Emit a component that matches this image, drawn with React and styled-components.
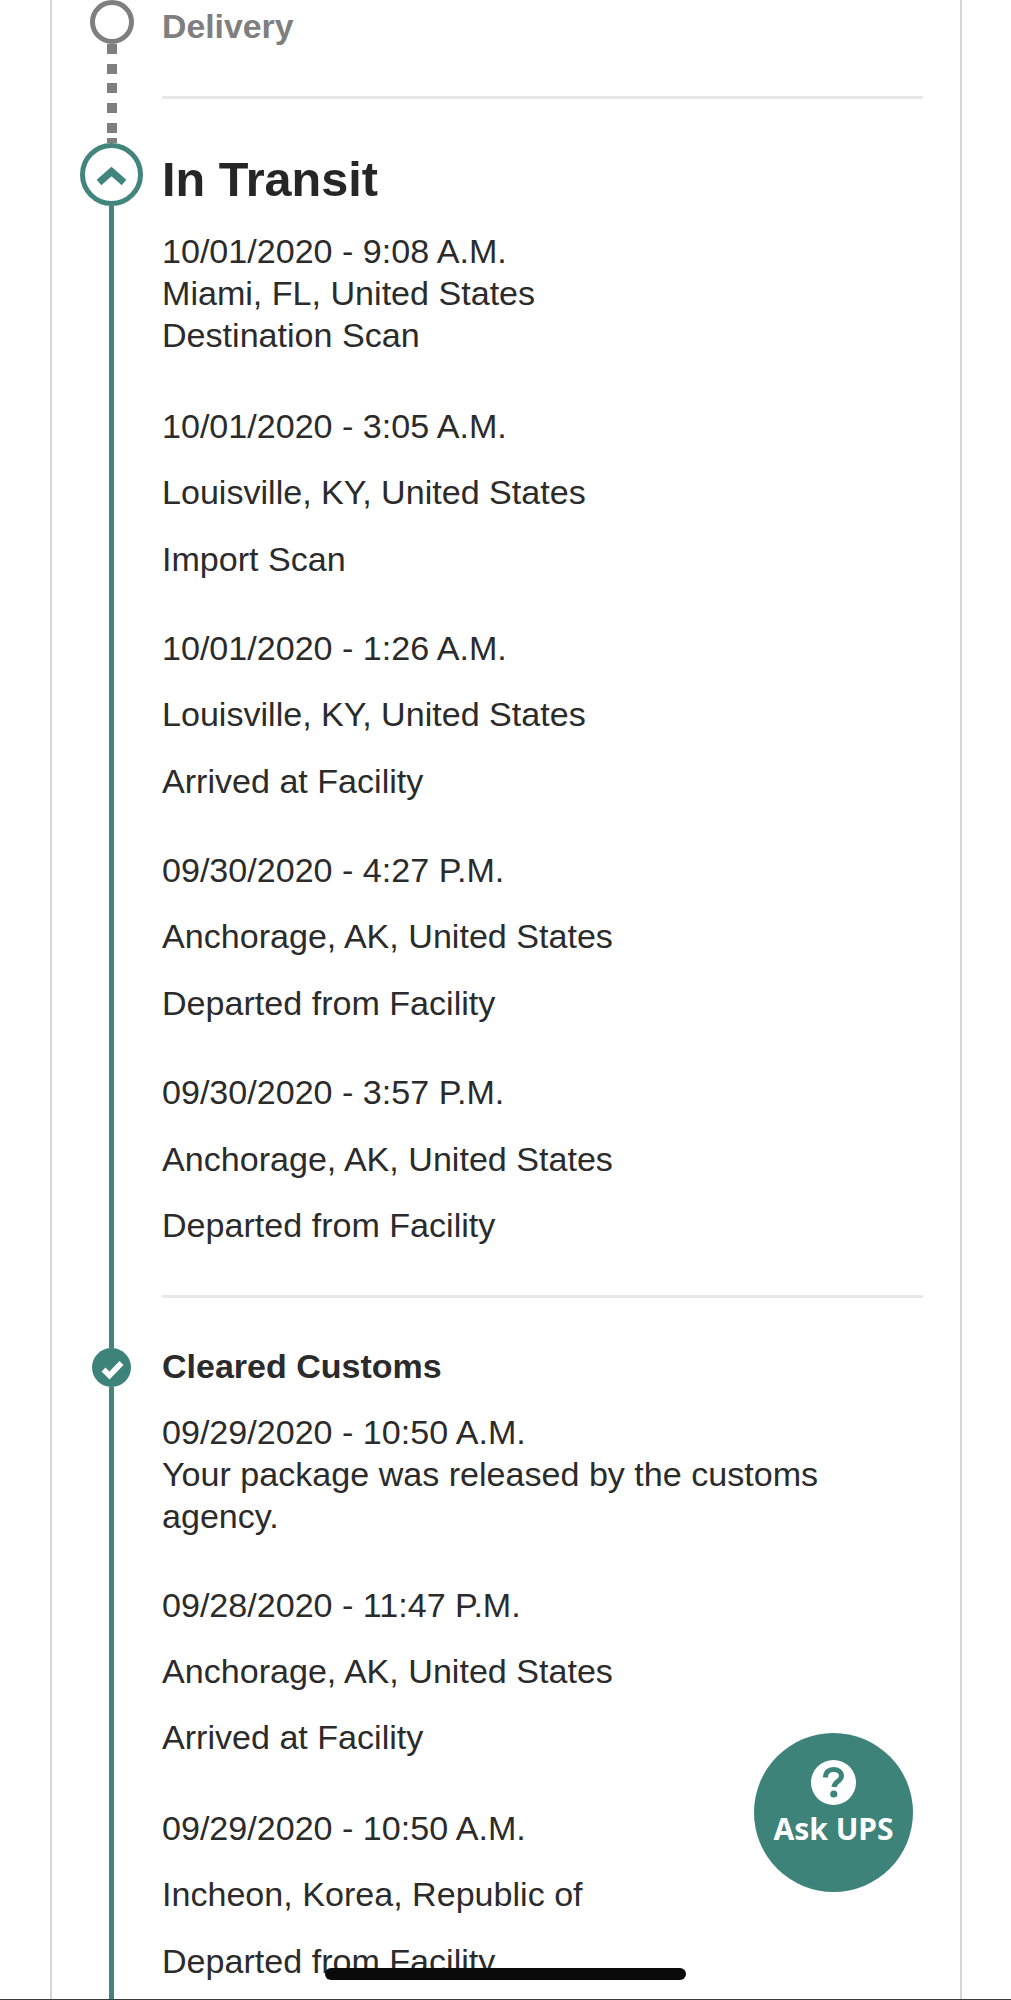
import React from "react";
import styled, { createGlobalStyle } from "styled-components";

const Global = createGlobalStyle`
  html, body { margin: 0; padding: 0; background: #fff; }
`;

const Page = styled.div`
  position: relative;
  box-sizing: border-box;
  width: 1011px;
  height: 2000px;
  overflow: hidden;
  background: #fff;
  border-bottom: 1px solid #3a3a3a;
  font-family: "Liberation Sans", Arial, sans-serif;
  color: #2b2b2b;
`;

const Card = styled.main`
  box-sizing: border-box;
  margin: 0 49px 0 50px;
  height: 100%;
  overflow: hidden;
  display: flex;
  flex-direction: column;
  border-left: 2px solid #d6d6d6;
  border-right: 2px solid #d6d6d6;
`;

const Section = styled.section`
  display: flex;
  flex: ${(p) => (p.$grow ? "1" : "none")};
`;

const Rail = styled.div`
  box-sizing: border-box;
  flex: 0 0 110px;
  width: 110px;
  padding-left: 9px;
  display: flex;
  flex-direction: column;
  align-items: center;
`;

const SolidLine = styled.div`
  flex: 1;
  width: 5px;
  background: #41857c;
`;

const DottedLine = styled.div`
  flex: 1;
  width: 10px;
  margin-left: 1px;
  background:
    linear-gradient(#7f7f7f, #7f7f7f) bottom / 100% 5px no-repeat,
    repeating-linear-gradient(to bottom, #7f7f7f 0 10px, transparent 10px 19.7px);
`;

const Marker = styled.svg`
  display: block;
  flex: none;
`;

const Content = styled.div`
  flex: 0 0 761px;
  width: 761px;
`;

const PendingTitle = styled.h3`
  margin: 0 0 49px;
  padding-top: 5px;
  font-size: 33.8px;
  line-height: 42px;
  font-weight: 700;
  color: #7f7f7f;
`;

const ActiveTitle = styled.h2`
  margin: 5px 0 20px;
  font-size: 48.6px;
  line-height: 62px;
  font-weight: 700;
  color: #262626;
`;

const DoneTitle = styled.h3`
  margin: 0 0 27px;
  font-size: 34px;
  line-height: 36px;
  font-weight: 700;
  color: #2b2b2b;
`;

const Rule = styled.hr`
  margin: ${(p) => p.$top ?? 0}px 0 ${(p) => p.$bottom ?? 0}px;
  border: 0;
  height: 3px;
  background: #e8e8e8;
`;

const Event = styled.div`
  margin-bottom: ${(p) => p.$after}px;
`;

const Line = styled.p`
  margin: 0 0 ${(p) => (p.$spaced ? 24.3 : 0)}px;
  font-size: 34.1px;
  line-height: 42px;
  &:last-child { margin-bottom: 0; }
`;

const AskButton = styled.button`
  position: absolute;
  left: 754px;
  top: 1733px;
  width: 159px;
  height: 159px;
  padding: 27px 0 0;
  border: 0;
  border-radius: 50%;
  background: #3d8379;
  color: #fff;
  display: flex;
  flex-direction: column;
  align-items: center;
  font-family: "Noto Sans", sans-serif;
  font-weight: 700;
  font-size: 30px;
  line-height: 38px;
`;

const AskLabel = styled.span`
  margin-top: 5px;
  white-space: nowrap;
`;

const HomeIndicator = styled.div`
  position: absolute;
  left: 325px;
  top: 1968px;
  width: 361px;
  height: 12px;
  border-radius: 6px;
  background: #0a0a0a;
`;

const EmptyCircle = () => (
  <Marker width="44" height="44" viewBox="0 0 44 44">
    <circle cx="22" cy="22" r="19.5" fill="#fff" stroke="#7f7f7f" strokeWidth="5" />
  </Marker>
);

const ChevronCircle = () => (
  <Marker width="63" height="63" viewBox="0 0 63 63">
    <circle cx="31.5" cy="31.5" r="29" fill="#fff" stroke="#41857c" strokeWidth="5" />
    <path d="M19 39.5 L31.5 28.5 L44 39.5" fill="none" stroke="#41857c" strokeWidth="7" />
  </Marker>
);

const CheckCircle = () => (
  <Marker width="39" height="39" viewBox="0 0 39 39">
    <circle cx="19.5" cy="19.5" r="19.5" fill="#3d8379" />
    <path d="M11.5 21.5 L17.5 27.5 L29.5 15" fill="none" stroke="#fff" strokeWidth="5.5" />
  </Marker>
);

const QuestionIcon = () => (
  <Marker width="45" height="45" viewBox="0 0 45 45">
    <circle cx="22.5" cy="22.5" r="22.5" fill="#fff" />
    <path d="M14.5 17.5 C14.5 12 18 9.5 22.5 9.5 C27 9.5 30.5 12 30.5 16 C30.5 21 23.5 21.5 23 27" fill="none" stroke="#3d8379" strokeWidth="5" />
    <circle cx="22.8" cy="34" r="3.6" fill="#3d8379" />
  </Marker>
);

const transit = [
  { lines: ["10/01/2020 - 9:08 A.M.", "Miami, FL, United States", "Destination Scan"], after: 49 },
  { lines: ["10/01/2020 - 3:05 A.M.", "Louisville, KY, United States", "Import Scan"], spaced: true, after: 47.5 },
  { lines: ["10/01/2020 - 1:26 A.M.", "Louisville, KY, United States", "Arrived at Facility"], spaced: true, after: 47.5 },
  { lines: ["09/30/2020 - 4:27 P.M.", "Anchorage, AK, United States", "Departed from Facility"], spaced: true, after: 47.5 },
  { lines: ["09/30/2020 - 3:57 P.M.", "Anchorage, AK, United States", "Departed from Facility"], spaced: true, after: 0 },
];

const customs = [
  { lines: ["09/29/2020 - 10:50 A.M.", "Your package was released by the customs", "agency."], after: 47 },
  { lines: ["09/28/2020 - 11:47 P.M.", "Anchorage, AK, United States", "Arrived at Facility"], spaced: true, after: 48.5 },
  { lines: ["09/29/2020 - 10:50 A.M.", "Incheon, Korea, Republic of", "Departed from Facility"], spaced: true, after: 0 },
];

const EventList = ({ items }) =>
  items.map((ev) => (
    <Event key={ev.lines[0] + ev.lines[1]} $after={ev.after}>
      {ev.lines.map((t) => (
        <Line key={t} $spaced={ev.spaced}>{t}</Line>
      ))}
    </Event>
  ));

export default function App() {
  return (
    <Page>
      <Global />
      <Card>
        <Section>
          <Rail>
            <EmptyCircle />
            <DottedLine />
          </Rail>
          <Content>
            <PendingTitle>Delivery</PendingTitle>
            <Rule $bottom={44} />
          </Content>
        </Section>
        <Section>
          <Rail>
            <ChevronCircle />
            <SolidLine />
          </Rail>
          <Content>
            <ActiveTitle>In Transit</ActiveTitle>
            <EventList items={transit} />
            <Rule $top={49} $bottom={50} />
          </Content>
        </Section>
        <Section $grow>
          <Rail>
            <CheckCircle />
            <SolidLine />
          </Rail>
          <Content>
            <DoneTitle>Cleared Customs</DoneTitle>
            <EventList items={customs} />
          </Content>
        </Section>
      </Card>
      <AskButton>
        <QuestionIcon />
        <AskLabel>Ask UPS</AskLabel>
      </AskButton>
      <HomeIndicator />
    </Page>
  );
}
